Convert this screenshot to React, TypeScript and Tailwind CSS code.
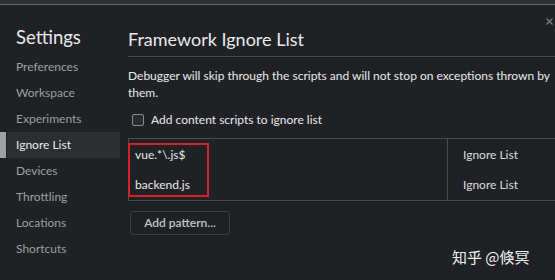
export default function App() {
  const nav = ["Preferences", "Workspace", "Experiments", "Ignore List", "Devices", "Throttling", "Locations", "Shortcuts"];
  const rows = ["vue.*\\.js$", "backend.js"];
  return (
    <div className="w-[555px] h-[280px] overflow-hidden bg-[#202124] text-[#e8eaed] font-['Lato',sans-serif] flex flex-col">
      <div className="h-[5px] bg-[#2e2f32] border-b border-[#6a6b6e] shrink-0" />
      <div className="flex flex-1">
        <div className="w-[128px] shrink-0 pt-[19px]">
          <div className="pl-[16px] text-[18.5px] leading-[26px] text-[#e8eaed] mb-[4px]">Settings</div>
          {nav.map((n) => (
            <div key={n} className="flex h-[26px]">
              <div className={n === "Ignore List" ? "w-[6px] bg-[#a0a1a4]" : "w-[6px]"} />
              <div
                className={
                  n === "Ignore List"
                    ? "ml-[1px] w-[113px] bg-[#2d2e31] pl-[9px] text-[12px] leading-[26px] text-[#e8eaed]"
                    : "ml-[1px] w-[113px] pl-[9px] text-[12px] leading-[26px] text-[#9aa0a6]"
                }
              >
                {n}
              </div>
            </div>
          ))}
        </div>
        <div className="flex-1 relative">
          <svg className="absolute right-[2px] top-[13px]" width="7" height="7" viewBox="0 0 7 7">
            <path d="M0.5 0.5 L6.5 6.5 M6.5 0.5 L0.5 6.5" stroke="#7d7f84" strokeWidth="1.2" />
          </svg>
          <div className="pt-[21px] text-[18px] leading-[26px] pb-[4px] border-b border-[#4a4c50]">Framework Ignore List</div>
          <div className="mt-[10px] text-[12px] leading-[17px] text-[#e8eaed] whitespace-nowrap">
            Debugger will skip through the scripts and will not stop on exceptions thrown by
            <br />
            them.
          </div>
          <div className="mt-[12px] flex items-center gap-[7px] pl-[4px] text-[12px] h-[14px]">
            <div className="w-[12px] h-[12px] rounded-[2px] border border-[#8a8c90] bg-[#2a2b2e]" />
            <span>Add content scripts to ignore list</span>
          </div>
          <div className="mt-[11px] border-t border-b border-l border-[#4a4c50] flex text-[12px]">
            <div className="w-[319px] border-r border-[#4a4c50] pt-[4px] pb-[2px]">
              <div className="w-[81px] border-2 border-[#d8202c] -ml-[1px] pl-[5px] flex flex-col gap-[10px]">
                {rows.map((r) => (
                  <div key={r} className="h-[20px] leading-[20px]">{r}</div>
                ))}
              </div>
            </div>
            <div className="flex-1 pl-[15px] pt-[1px]">
              {rows.map((r) => (
                <div key={r} className="h-[30px] leading-[30px] text-[#dadce0]">Ignore List</div>
              ))}
            </div>
          </div>
          <div className="mt-[10px] ml-[2px] w-[100px] h-[24px] border border-[#3c3e42] rounded-[3px] flex items-center justify-center text-[12px] font-semibold text-[#c4c7cc]">
            Add pattern...
          </div>
          <div className="absolute left-[324px] top-[241px] text-[15px] text-[#f0f0f0] font-['Noto_Sans_CJK_SC',sans-serif]">知乎 @倏冥</div>
        </div>
      </div>
    </div>
  );
}
